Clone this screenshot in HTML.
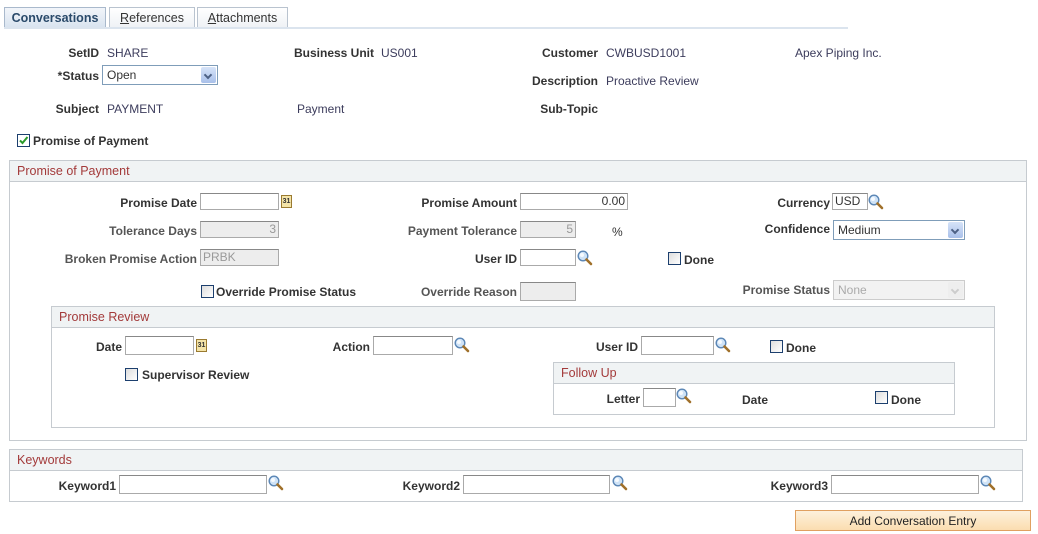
<!DOCTYPE html>
<html><head><meta charset="utf-8"><style>
body{margin:0;width:1038px;height:534px;background:#fff;position:relative;font-family:"Liberation Sans",Arial,sans-serif;font-size:12px;color:#333;overflow:hidden}
.a{position:absolute;white-space:nowrap}
.l{position:absolute;font-weight:bold;color:#333;white-space:nowrap;text-align:right;margin-top:1px}
.v{position:absolute;color:#3c3c5c;white-space:nowrap;margin-top:1px}
.in{position:absolute;height:17px;border:1px solid #aaa;border-top-color:#888;background:#fff;box-sizing:border-box;font-size:12px;color:#333;line-height:15px;padding:0 2px}
.dis{background:#ededed;color:#999}
.sel{position:absolute;height:20px;border:1px solid #7f9db9;background:#fff;box-sizing:border-box;line-height:18px;padding-left:4px;color:#333}
.sel i{position:absolute;right:1px;top:1px;width:15px;height:16px;background:linear-gradient(#d6e3f8,#a9c0ea);border-radius:2px}
.sel i:after{content:"";position:absolute;left:4px;top:5px;width:4px;height:4px;border-right:2px solid #4d6185;border-bottom:2px solid #4d6185;transform:rotate(45deg)}
.sel.d{border-color:#ccc;background:#f2f2f2;color:#aaa}
.sel.d i{background:#eee}.sel.d i:after{border-color:#ccc}
.cb{position:absolute;width:11px;height:11px;border:1px solid #1c3f6e;background:linear-gradient(135deg,#ddd,#fff)}
.box{position:absolute;border:1px solid #c6cbd0;box-sizing:border-box}
.hd{position:absolute;left:0;right:0;top:0;height:21px;background:#f0f3f4;border-bottom:1px solid #c6cbd0;color:#a33a3a;font-size:12.5px;line-height:21px;padding-left:7px;box-sizing:border-box}
.mg{position:absolute;width:16px;height:16px}
.cal{position:absolute;width:11px;height:13px;background:#f4e4a8;border:1px solid #9a7a30;box-sizing:border-box;font-size:7px;font-weight:bold;line-height:11px;text-align:center;color:#333}
.tab{position:absolute;top:7px;height:21px;border:1px solid #b9c3cf;border-bottom:none;box-sizing:border-box;background:linear-gradient(#fff,#eef1f5);color:#333;font-size:12.5px;line-height:21px;text-align:center}
</style></head><body>
<div class="tab" style="left:4px;width:102px;background:linear-gradient(#f2f5fa,#d8e3ef);color:#2a4a6a;font-weight:bold;border-color:#a9b9cc">Conversations</div>
<div class="tab" style="left:109px;width:86px"><u>R</u>eferences</div>
<div class="tab" style="left:197px;width:91px"><u>A</u>ttachments</div>
<div class="a" style="left:4px;top:27px;width:844px;height:2px;background:#dbe4ee"></div>

<svg width="0" height="0" style="position:absolute"><defs><g id="m"><circle cx="6" cy="6" r="4.8" fill="#cfe3f7" stroke="#5b86b5" stroke-width="1.4"/><circle cx="5" cy="5" r="2" fill="#fff" opacity=".8"/><path d="M9.5 9.5L14 14" stroke="#a0702a" stroke-width="2.6" stroke-linecap="round"/></g></defs></svg>

<div class="l" style="right:939px;top:45px">SetID</div><div class="v" style="left:107px;top:45px">SHARE</div>
<div class="l" style="right:664px;top:45px">Business Unit</div><div class="v" style="left:381px;top:45px">US001</div>
<div class="l" style="right:440px;top:45px">Customer</div><div class="v" style="left:606px;top:45px">CWBUSD1001</div>
<div class="v" style="left:795px;top:45px">Apex Piping Inc.</div>
<div class="l" style="right:939px;top:68px">*Status</div>
<div class="sel" style="left:102px;top:65px;width:116px">Open<i></i></div>
<div class="l" style="right:440px;top:73px">Description</div><div class="v" style="left:606px;top:73px">Proactive Review</div>
<div class="l" style="right:939px;top:101px">Subject</div><div class="v" style="left:107px;top:101px">PAYMENT</div>
<div class="v" style="left:297px;top:101px">Payment</div>
<div class="l" style="right:440px;top:101px">Sub-Topic</div>
<div class="cb" style="left:17px;top:134px;background:#fff"><svg width="11" height="11" style="position:absolute;left:0;top:0"><path d="M2 5.5L4.5 8L9.5 2" stroke="#2a9a2a" stroke-width="2" fill="none"/></svg></div>
<div class="l" style="left:33px;top:133px">Promise of Payment</div>

<div class="box" style="left:9px;top:160px;width:1018px;height:281px"><div class="hd">Promise of Payment</div></div>
<div class="l" style="right:841px;top:195px">Promise Date</div>
<div class="in" style="left:200px;top:193px;width:79px"></div><div class="cal" style="left:281px;top:195px">31</div>
<div class="l" style="right:521px;top:195px">Promise Amount</div>
<div class="in" style="left:520px;top:193px;width:108px;text-align:right">0.00</div>
<div class="l" style="right:208px;top:195px">Currency</div>
<div class="in" style="left:832px;top:193px;width:36px">USD</div><svg class="mg" style="left:868px;top:194px"><use href="#m"/></svg>

<div class="l" style="right:841px;top:223px;color:#555">Tolerance Days</div>
<div class="in dis" style="left:200px;top:221px;width:79px;text-align:right">3</div>
<div class="l" style="right:521px;top:223px;color:#555">Payment Tolerance</div>
<div class="in dis" style="left:520px;top:221px;width:56px;text-align:right">5</div>
<div class="v" style="left:612px;top:224px;color:#333">%</div>
<div class="l" style="right:208px;top:221px">Confidence</div>
<div class="sel" style="left:833px;top:220px;width:132px">Medium<i></i></div>

<div class="l" style="right:841px;top:251px;color:#555">Broken Promise Action</div>
<div class="in dis" style="left:200px;top:249px;width:79px">PRBK</div>
<div class="l" style="right:521px;top:251px">User ID</div>
<div class="in" style="left:520px;top:249px;width:56px"></div><svg class="mg" style="left:577px;top:250px"><use href="#m"/></svg>
<div class="cb" style="left:668px;top:252px"></div><div class="l" style="left:684px;top:252px">Done</div>

<div class="cb" style="left:201px;top:285px"></div><div class="l" style="left:216px;top:284px">Override Promise Status</div>
<div class="l" style="right:521px;top:284px;color:#555">Override Reason</div>
<div class="in dis" style="left:520px;top:282px;width:56px;height:19px"></div>
<div class="l" style="right:208px;top:282px;color:#555">Promise Status</div>
<div class="sel d" style="left:833px;top:280px;width:132px">None<i></i></div>

<div class="box" style="left:51px;top:306px;width:944px;height:122px"><div class="hd">Promise Review</div></div>
<div class="l" style="right:916px;top:339px">Date</div>
<div class="in" style="left:125px;top:336px;width:69px;height:19px"></div><div class="cal" style="left:196px;top:339px">31</div>
<div class="l" style="right:668px;top:339px">Action</div>
<div class="in" style="left:373px;top:336px;width:80px;height:19px"></div><svg class="mg" style="left:454px;top:337px"><use href="#m"/></svg>
<div class="l" style="right:400px;top:339px">User ID</div>
<div class="in" style="left:641px;top:336px;width:73px;height:19px"></div><svg class="mg" style="left:715px;top:337px"><use href="#m"/></svg>
<div class="cb" style="left:770px;top:340px"></div><div class="l" style="left:786px;top:340px">Done</div>
<div class="cb" style="left:125px;top:368px"></div><div class="l" style="left:142px;top:367px">Supervisor Review</div>

<div class="box" style="left:553px;top:362px;width:402px;height:53px"><div class="hd">Follow Up</div></div>
<div class="l" style="right:398px;top:391px">Letter</div>
<div class="in" style="left:643px;top:388px;width:33px;height:19px"></div><svg class="mg" style="left:676px;top:388px"><use href="#m"/></svg>
<div class="l" style="left:742px;top:392px">Date</div>
<div class="cb" style="left:875px;top:391px"></div><div class="l" style="left:891px;top:392px">Done</div>

<div class="box" style="left:9px;top:449px;width:1014px;height:53px"><div class="hd">Keywords</div></div>
<div class="l" style="right:922px;top:478px">Keyword1</div>
<div class="in" style="left:119px;top:475px;width:148px;height:19px"></div><svg class="mg" style="left:268px;top:475px"><use href="#m"/></svg>
<div class="l" style="right:578px;top:478px">Keyword2</div>
<div class="in" style="left:463px;top:475px;width:147px;height:19px"></div><svg class="mg" style="left:612px;top:475px"><use href="#m"/></svg>
<div class="l" style="right:210px;top:478px">Keyword3</div>
<div class="in" style="left:831px;top:475px;width:148px;height:19px"></div><svg class="mg" style="left:980px;top:475px"><use href="#m"/></svg>

<div class="a" style="left:795px;top:510px;width:236px;height:21px;box-sizing:border-box;border:1px solid #e0a060;background:linear-gradient(#fdf1dc,#fbddb0);text-align:center;line-height:20px;color:#222">Add Conversation Entry</div>
</body></html>
